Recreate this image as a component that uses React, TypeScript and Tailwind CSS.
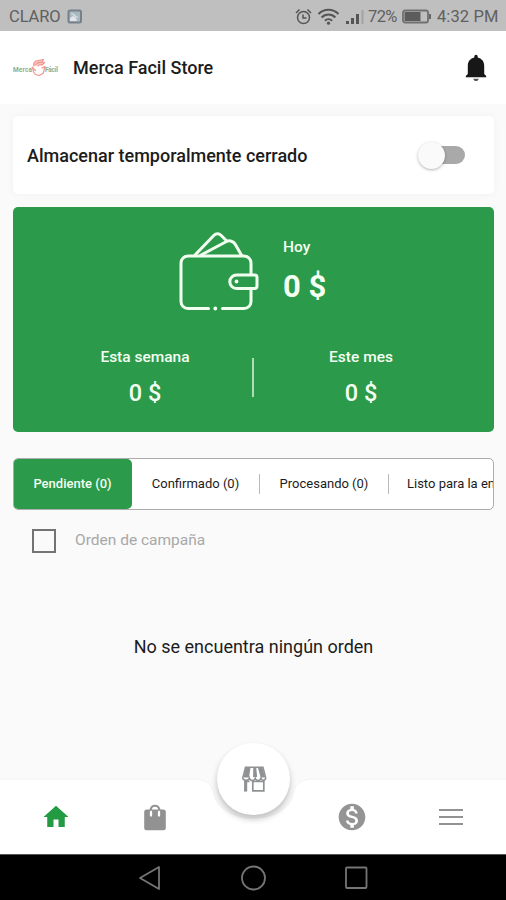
import React from "react";
import { MdHome, MdMonetizationOn } from "react-icons/md";

function StatusBar() {
  return (
    <div className="flex h-[31px] shrink-0 items-center bg-[#bfbfbf] pl-[9px] pr-[7px] pt-[3px] text-[16.5px] text-[#606060]">
      <span className="w-[54px] whitespace-nowrap tracking-[-0.1px]">CLARO</span>
      <svg className="ml-[4px]" width="16" height="16" viewBox="0 0 16 16">
        <rect x="1.500" y="1.500" width="12.500" height="12" rx="1.500" fill="#a9b8c0" stroke="#75828c" strokeWidth="2" />
        <path d="M3 12V9l3-2 3 2 1 3z" fill="#e2e6e8" />
        <path d="M4 5h2l3 3h2" stroke="#dfe5e8" strokeWidth="1.200" fill="none" />
      </svg>
      <div className="flex-1" />
      <svg width="17" height="18" viewBox="0 0 17 18" fill="none" stroke="#555" strokeWidth="1.500">
        <circle cx="8.500" cy="9.500" r="6" />
        <path d="M1 5l3.500-3.500M16 5l-3.500-3.500M8 6.500v3.500h3.500" />
      </svg>
      <svg className="ml-[5px]" width="23" height="18" viewBox="0 0 23 18" fill="none" stroke="#555" strokeWidth="2">
        <path d="M1.500 6C7 .3 16 .3 21.500 6M4.600 9.500c3.800-3.900 10-3.900 13.800 0M7.900 12.700c2.100-2 5.100-2 7.200 0" />
        <circle cx="11.500" cy="15.200" r="1.600" fill="#555" stroke="none" />
      </svg>
      <svg className="ml-[5px]" width="20" height="16" viewBox="0 0 20 16">
        <path d="M1 12h3v3H1zM6 9h3v6H6zM11 5h3v10h-3z" fill="#555" />
        <path d="M16.500 1h2v14h-2z" fill="#a3a3a3" />
      </svg>
      <span className="ml-[3px] w-[30px] whitespace-nowrap tracking-[-0.6px]">72%</span>
      <svg className="ml-[4px]" width="30" height="16" viewBox="0 0 30 16">
        <rect x="1" y="1.500" width="25" height="12" rx="2" fill="none" stroke="#707070" strokeWidth="1.800" />
        <path d="M2.500 3h16v9h-16z" fill="#5c5c5c" />
        <path d="M27 5h2v5h-2z" fill="#666" />
      </svg>
      <span className="ml-[5px] w-[62px] whitespace-nowrap tracking-[0.1px]">4:32 PM</span>
    </div>
  );
}

function StoreLogo() {
  return (
    <svg width="48" height="20" viewBox="0 0 48 20">
      <g fill="none" stroke="#f0938a" strokeWidth="1.200" strokeLinecap="round" strokeLinejoin="round">
        <path d="M22 8C21 5 23 2.500 26 2.500L31.500 1.500 30 4l2.500.5L30 7" fill="#f9c9c3" />
        <path d="M24 6.500c1-1.800 3-2.400 5.500-2M26 8c.8-1.200 2-1.500 3.500-1" />
        <path d="M20 9.500c1.500 0 2.500 2 3.500 3M20.500 9l1 5 2 2.500 3.500 1L31 15.500l1-3 1-4-3 1.500" />
      </g>
      <text x="1" y="13.800" fontSize="6.500" fontWeight="600" fill="#86a881" textLength="19">Merca</text>
      <text x="33" y="13.800" fontSize="6.500" fontWeight="600" fill="#86a881" textLength="13">Fácil</text>
    </svg>
  );
}

function Bell() {
  return (
    <svg width="22" height="28" viewBox="0 0 22 28" fill="#171717">
      <path d="M9.300 3.500V2.500a1.700 1.700 0 0 1 3.400 0v1c4 .9 6.500 4 6.500 8.200V20l2 2v1.200H.8V22l2-2v-8.300C2.800 7.500 5.300 4.400 9.300 3.500z" />
      <path d="M8.300 24.700h5.400c-.3 1.500-1.400 2.300-2.700 2.300s-2.400-.8-2.700-2.300z" fill="#555" />
    </svg>
  );
}

function Wallet() {
  return (
    <svg width="80" height="80" viewBox="0 0 80 80" fill="none" stroke="#f2fff0" strokeWidth="3" strokeLinecap="round" strokeLinejoin="round">
      <path d="M29.500 77.500H9a7 7 0 0 1-7-7V32a7 7 0 0 1 7-7h56a7 7 0 0 1 7 7v11.500M72 58v12.500a7 7 0 0 1-7 7H43.500" />
      <path d="M75.500 44H57.500a6.700 6.700 0 0 0 0 13.400h18a2.500 2.500 0 0 0 2.500-2.500v-8.400a2.500 2.500 0 0 0-2.500-2.500" />
      <path d="M16 24L35 4.300a5 5 0 0 1 7 0l6 6M22 24L47 10.700a7 7 0 0 1 9.500 3l6 10.500" />
      <circle cx="57.500" cy="50.500" r="1.900" fill="#f2fff0" stroke="none" />
      <circle cx="36.300" cy="77.500" r="1.900" fill="#f2fff0" stroke="none" />
    </svg>
  );
}

function ShoppingBag() {
  return (
    <svg width="22" height="27" viewBox="0 0 22 27">
      <rect x=".2" y="5.500" width="21.600" height="20.700" rx="2.500" fill="#929292" />
      <path d="M6.700 7V5a4.500 4.500 0 0 1 8.600 0V7" fill="none" stroke="#929292" strokeWidth="2" />
      <path d="M7 8v3.500M15 8v3.500" stroke="#fff" strokeWidth="2.300" strokeLinecap="round" />
    </svg>
  );
}

function Storefront() {
  return (
    <svg width="26" height="26" viewBox="0 0 26 26" fill="none" stroke="#8e9294" strokeWidth="1.500">
      <path d="M4.500 1.300h17.500l2.700 10.500c0 3-3.900 3.500-4.700.5-.8 3-5 3-5.800 0-.8 3-5 3-5.800 0C7.600 15.300 1.600 14.800 1.800 11.800z" />
      <path d="M4.500 1.500h5L8 11.500H2.500zM12.300 2h3l.8 9h-4zM17 2h4.500l2.700 9.500h-4.500z" fill="#8e9294" stroke="none" />
      <path d="M4.200 14v11.300M5.500 15.500h3M11.800 15.500h11v9.300h-11z" strokeWidth="1.700" />
      <path d="M4.700 14v11.500" strokeWidth="3" />
    </svg>
  );
}

function Amount({ label }: { label: string }) {
  return (
    <div className="flex flex-1 flex-col items-center text-[#f4fff2]">
      <span className="text-[15.5px] leading-[20px] font-medium">{label}</span>
      <span className="mt-[10px] text-[23.5px] leading-[32px] font-medium">0 $</span>
    </div>
  );
}

function Divider() {
  return <div className="h-[20px] w-px shrink-0 bg-[#b8b8b8]" />;
}

export default function App() {
  return (
    <div className="flex h-[900px] w-[506px] flex-col overflow-hidden bg-[#fafafa] font-['Roboto',sans-serif] text-[#1c1c1c]">
      <StatusBar />
      <header className="flex h-[73px] shrink-0 items-center bg-white pl-[12px] pr-[19px]">
        <StoreLogo />
        <h1 className="ml-[13px] flex-1 text-[18px] font-medium">Merca Facil Store</h1>
        <Bell />
      </header>

      <main className="flex flex-1 flex-col pl-[13px] pr-[12px] pt-[12px]">
        <section className="flex h-[78px] shrink-0 items-center justify-between rounded-[5px] bg-white pl-[14px] pr-[29px] shadow-[0_0_8px_rgba(0,0,0,0.04)]">
          <span className="text-[18px] font-medium">Almacenar temporalmente cerrado</span>
          <div className="flex h-[27px] w-[47px] items-center justify-end">
            <div className="flex h-[18px] w-[42px] items-center rounded-full bg-[#a9a9a9]">
              <div className="-ml-[5px] h-[27px] w-[27px] shrink-0 rounded-full bg-[#fafafa] shadow-[0_1px_3px_rgba(0,0,0,0.3)]" />
            </div>
          </div>
        </section>

        <section className="mt-[13px] flex h-[225px] shrink-0 flex-col rounded-[5px] bg-[#2b9a4a]">
          <div className="flex pl-[166px] pt-[24px]">
            <Wallet />
            <div className="ml-[24px] flex flex-col pt-[6px] text-[#f4fff2]">
              <span className="text-[15.5px] leading-[20px] font-medium">Hoy</span>
              <span className="mt-[10px] text-[31px] leading-[40px] font-bold">0 $</span>
            </div>
          </div>
          <div className="mt-[36px] flex pr-[26px] pl-[25px]">
            <Amount label="Esta semana" />
            <div className="mt-[11px] h-[39px] w-[2px] bg-[#b0dcb5]" />
            <Amount label="Este mes" />
          </div>
        </section>

        <nav className="mt-[26px] flex h-[52px] shrink-0 items-center overflow-hidden rounded-[5px] border border-[#acacac] bg-white text-[13px] whitespace-nowrap">
          <div className="-ml-px flex h-[50px] w-[119px] shrink-0 items-center justify-center rounded-[5px] bg-[#2b9a4a] font-medium text-[#f4fff2]">Pendiente (0)</div>
          <div className="w-[127px] shrink-0 text-center">Confirmado (0)</div>
          <Divider />
          <div className="w-[128px] shrink-0 text-center">Procesando (0)</div>
          <Divider />
          <div className="shrink-0 pl-[18px]">Listo para la en</div>
        </nav>

        <label className="mt-[18px] flex h-[25px] shrink-0 items-center pl-[19px]">
          <span className="h-[24px] w-[24px] border-2 border-[#737373]" />
          <span className="ml-[19px] text-[15.5px] text-[#a8a8a8]">Orden de campaña</span>
        </label>
        <p className="mt-[82px] text-center text-[18px] leading-[24px]">No se encuentra ningún orden</p>
      </main>

      <footer className="relative h-[76px] shrink-0">
        <svg className="absolute top-0 left-0" width="506" height="76" viewBox="0 0 506 76">
          <path d="M-2 1H193C206 1 212 6 214 16C221 48 286 48 293 16C295 6 301 1 314 1H508V78H-2z" fill="#fff" stroke="#f4f4f4" strokeWidth="1" />
        </svg>
        <div className="relative flex h-full items-center pt-[2px]">
          <div className="flex w-[112px] justify-center"><MdHome size={30} color="#229b43" /></div>
          <div className="flex w-[86px] justify-center"><ShoppingBag /></div>
          <div className="w-[110px]" />
          <div className="flex w-[88px] justify-center"><MdMonetizationOn size={32} color="#949494" /></div>
          <div className="flex flex-1 justify-center">
            <div className="flex w-[24px] flex-col gap-[5px]">
              <div className="h-[2px] bg-[#929292]" />
              <div className="h-[2px] bg-[#929292]" />
              <div className="h-[2px] bg-[#929292]" />
            </div>
          </div>
        </div>
        <div className="absolute -top-[35px] left-[217px] flex h-[72px] w-[73px] items-center justify-center rounded-full bg-white shadow-[0_4px_6px_rgba(0,0,0,0.24)]">
          <Storefront />
        </div>
      </footer>

      <div className="flex h-[46px] shrink-0 items-center justify-center gap-[75px] border-t border-[#555] bg-black">
        <svg width="28" height="28" viewBox="0 0 28 28" fill="none" stroke="#757575" strokeWidth="1.800" strokeLinejoin="round"><path d="M4 14L23 3v22z" /></svg>
        <svg width="28" height="28" viewBox="0 0 28 28" fill="none" stroke="#757575" strokeWidth="1.800"><circle cx="14.500" cy="14" r="11.500" /></svg>
        <svg width="28" height="28" viewBox="0 0 28 28" fill="none" stroke="#757575" strokeWidth="1.800"><rect x="4" y="3.500" width="20.500" height="20.500" rx="1" /></svg>
      </div>
    </div>
  );
}
